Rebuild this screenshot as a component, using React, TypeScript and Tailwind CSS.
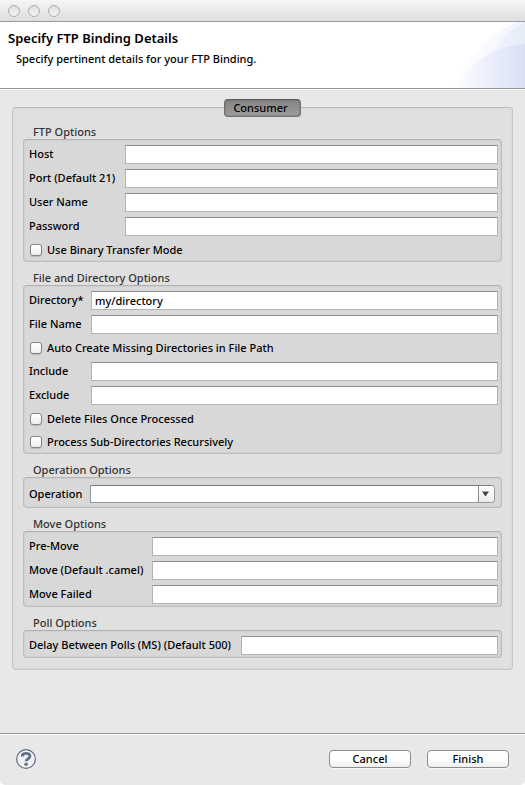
import { useId, useState, type ReactNode } from "react";

function Group({ title, children }: { title: string; children: ReactNode }) {
  return (
    <fieldset className="min-w-0">
      <legend className="block h-[14px] px-[10px] leading-[14px] text-[#333]">{title}</legend>
      <div className="flex flex-col gap-[5px] rounded-[4px] border border-[#bdbdbd] border-t-[#b2b2b2] bg-[#d8d8d8] pt-[5px] pr-[3px] pb-[2px] pl-[5px] shadow-[inset_0_0_2px_rgba(0,0,0,0.12)]">
        {children}
      </div>
    </fieldset>
  );
}

type FieldProps = { label: string; labelWidth: string; value?: string; type?: string };

function Field({ label, labelWidth, value = "", type = "text" }: FieldProps) {
  const id = useId();
  return (
    <div className="flex h-[19px] items-center">
      <label htmlFor={id} className={`shrink-0 pb-px whitespace-nowrap ${labelWidth}`}>
        {label}
      </label>
      <input
        id={id}
        type={type}
        defaultValue={value}
        className="h-full min-w-0 flex-1 border border-[#b4b4b4] border-t-[#8e8e8e] bg-white px-[3px] outline-none"
      />
    </div>
  );
}

function Check({ label }: { label: string }) {
  return (
    <label className="flex h-[18px] items-center gap-[5px] pl-px">
      <input
        type="checkbox"
        className="size-3 shrink-0 appearance-none rounded-[3px] border border-[#858585] bg-linear-to-b from-white to-[#efefef] shadow-[0_1px_1px_rgba(0,0,0,0.15)] checked:bg-[#7fa8de]"
      />
      {label}
    </label>
  );
}

function Dropdown({ label, labelWidth }: { label: string; labelWidth: string }) {
  const id = useId();
  return (
    <div className="flex h-[22px] items-center pr-[3px]">
      <label htmlFor={id} className={`shrink-0 ${labelWidth}`}>
        {label}
      </label>
      <div className="relative h-[18px] min-w-0 flex-1">
        <select
          id={id}
          className="block size-full appearance-none rounded-r-[4px] border border-[#969696] border-t-[#7d7d7d] bg-white px-[3px] outline-none"
        >
          <option value="" />
        </select>
        <span className="pointer-events-none absolute inset-y-px right-px flex w-4 items-center justify-center rounded-r-[3px] border-l border-[#8a8a8a] bg-linear-to-b from-white to-[#ececec] pr-[2px]">
          <svg viewBox="0 0 7 6" className="h-[6px] w-[7px]" aria-hidden="true">
            <path d="M0 0.5h7L3.5 5.5z" fill="#444" />
          </svg>
        </span>
      </div>
    </div>
  );
}

function HeaderArt() {
  return (
    <svg viewBox="0 0 72 66" className="absolute top-0 right-0 h-[66px] w-[72px]" aria-hidden="true">
      <defs>
        <linearGradient id="outer" x1="0" x2="72" y1="0" y2="0" gradientUnits="userSpaceOnUse">
          <stop offset="0" stopColor="#fff" />
          <stop offset="1" stopColor="#f1f4fc" />
        </linearGradient>
        <linearGradient id="middle" x1="30" x2="72" y1="0" y2="0" gradientUnits="userSpaceOnUse">
          <stop offset="0" stopColor="#f6f8fd" />
          <stop offset="1" stopColor="#e6ebf9" />
        </linearGradient>
        <linearGradient id="inner" x1="0" x2="72" y1="0" y2="0" gradientUnits="userSpaceOnUse">
          <stop offset="0" stopColor="#fff" />
          <stop offset="0.5" stopColor="#eceffb" />
          <stop offset="1" stopColor="#d9e0f6" />
        </linearGradient>
      </defs>
      <path d="M0 66C12 36 38 11 64 0H72V66z" fill="url(#outer)" />
      <path d="M28 66C32 38 48 10 72 0V66z" fill="url(#middle)" />
      <path d="M0 66C18 38 44 23 72 22V66z" fill="url(#inner)" />
    </svg>
  );
}

function PushButton({ children }: { children: ReactNode }) {
  return (
    <button
      type="button"
      className="h-[18px] w-[82px] rounded-[4px] border border-[#8c8c8c] bg-linear-to-b from-white from-45% to-[#efefef] leading-4 shadow-[0_1px_0_rgba(255,255,255,0.6)]"
    >
      {children}
    </button>
  );
}

export default function App() {
  const [tab, setTab] = useState("consumer");
  return (
    <div className="bg-white">
      <div className="flex min-h-screen flex-col overflow-hidden rounded-b-[5px] bg-[#e8e8e8] font-['Noto_Sans','Lucida_Grande',sans-serif] text-[11px] leading-[14px] font-medium text-black">
        <div className="flex h-[22px] items-center gap-2 border-b border-[#9b9b9b] bg-linear-to-b from-[#f6f6f6] to-[#dedede] px-2">
          {["Close", "Minimize", "Zoom"].map((name) => (
            <button
              key={name}
              type="button"
              aria-label={name}
              className="size-3 rounded-full border border-[#ababab] bg-linear-to-b from-[#dcdcdc] to-[#f6f6f6]"
            />
          ))}
        </div>

        <header className="relative h-[67px] border-b border-[#979797] bg-white px-2 pt-2">
          <HeaderArt />
          <h1 className="relative text-[13px] leading-4 font-semibold">Specify FTP Binding Details</h1>
          <p className="relative mt-[6px] pl-2">Specify pertinent details for your FTP Binding.</p>
        </header>

        <main className="flex flex-1 flex-col border-t border-white px-3 pt-[9px] pb-3">
          <div role="tablist" className="relative z-10 -mb-[10px] flex justify-center">
            <button
              type="button"
              role="tab"
              aria-selected={tab === "consumer"}
              onClick={() => setTab("consumer")}
              className="h-[18px] w-[77px] rounded-[4px] border border-[#6f6f6f] border-t-[#5e5e5e] bg-linear-to-b from-[#848484] to-[#9d9d9d] pr-1 leading-4 shadow-[inset_0_0_2px_rgba(0,0,0,0.3)]"
            >
              Consumer
            </button>
          </div>
          <form className="flex flex-col gap-[9px] rounded-[4px] border border-[#c6c6c6] border-t-[#bcbcbc] bg-[#e0e0e0] px-[10px] pt-[17px] pb-[11px] shadow-[inset_0_0_2px_rgba(0,0,0,0.08)]">
            <Group title="FTP Options">
              <Field label="Host" labelWidth="w-24" />
              <Field label="Port (Default 21)" labelWidth="w-24" />
              <Field label="User Name" labelWidth="w-24" />
              <Field label="Password" labelWidth="w-24" type="password" />
              <Check label="Use Binary Transfer Mode" />
            </Group>
            <Group title="File and Directory Options">
              <Field label="Directory*" labelWidth="w-[62px]" value="my/directory" />
              <Field label="File Name" labelWidth="w-[62px]" />
              <Check label="Auto Create Missing Directories in File Path" />
              <Field label="Include" labelWidth="w-[62px]" />
              <Field label="Exclude" labelWidth="w-[62px]" />
              <Check label="Delete Files Once Processed" />
              <Check label="Process Sub-Directories Recursively" />
            </Group>
            <Group title="Operation Options">
              <Dropdown label="Operation" labelWidth="w-[61px]" />
            </Group>
            <Group title="Move Options">
              <Field label="Pre-Move" labelWidth="w-[123px]" />
              <Field label="Move (Default .camel)" labelWidth="w-[123px]" />
              <Field label="Move Failed" labelWidth="w-[123px]" />
            </Group>
            <Group title="Poll Options">
              <Field label="Delay Between Polls (MS) (Default 500)" labelWidth="w-[212px]" />
            </Group>
          </form>
        </main>

        <footer className="border-t border-[#979797]">
          <div className="flex h-[51px] items-center gap-4 border-t border-white px-4 pb-[2px]">
            <button type="button" aria-label="Help" className="mr-auto size-5">
              <svg viewBox="0 0 20 20" className="size-5" aria-hidden="true">
                <circle cx="10" cy="10" r="9.3" fill="#f0f2f5" stroke="#5f6b80" strokeWidth="1.2" />
                <path
                  d="M6.2 7.4C6.2 5 8 4.4 10 4.4s3.9 0.9 3.9 2.9c0 2.5-3.6 2.4-3.6 5"
                  fill="none"
                  stroke="#66738b"
                  strokeWidth="2.9"
                />
                <circle cx="10.1" cy="15.2" r="1.8" fill="#66738b" />
              </svg>
            </button>
            <PushButton>Cancel</PushButton>
            <PushButton>Finish</PushButton>
          </div>
        </footer>
      </div>
    </div>
  );
}
